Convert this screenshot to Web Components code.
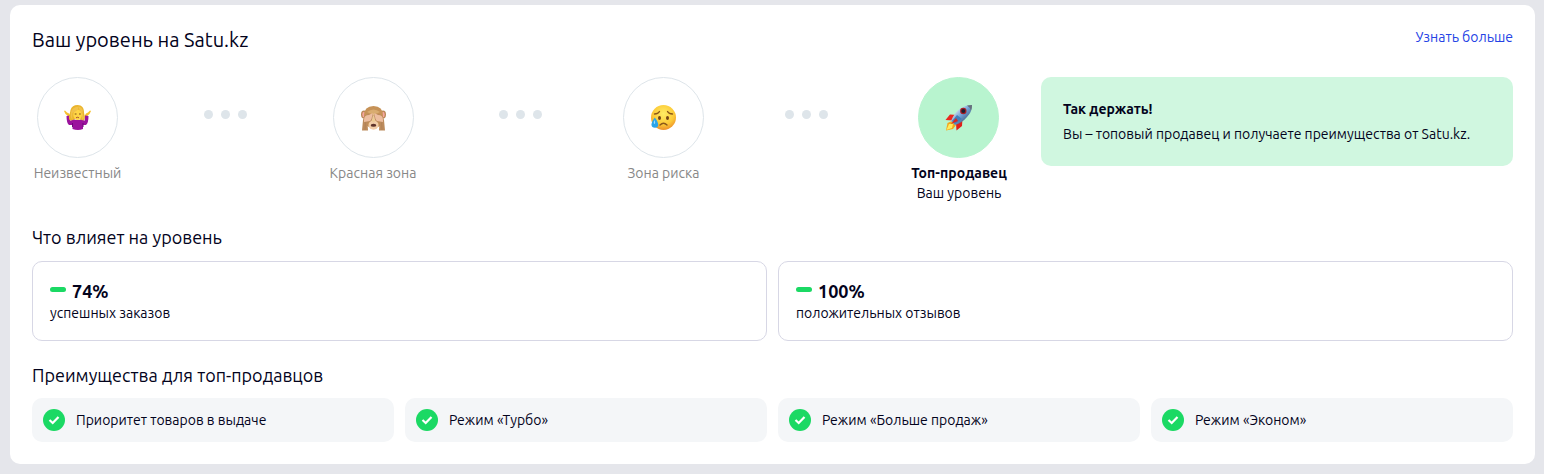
<!DOCTYPE html>
<html lang="ru">
<head>
<meta charset="utf-8">
<title>Ваш уровень на Satu.kz</title>
<style>
body{margin:0;padding:5px 9px 10px 10px;background:#e5e6eb;color:#03031c;font:14px/20px Ubuntu,"Noto Sans",sans-serif}
</style>
</head>
<body>
<seller-level></seller-level>

<template id="t-level">
<style>
:host{display:block;background:#fff;border-radius:10px;padding:22px}
header{display:flex;justify-content:space-between;align-items:flex-start}
h1,h2{margin:0;font-weight:400}
h1{font-size:20px;line-height:26px}
h2{font-size:18px;line-height:24px}
a{color:#2543e5;text-decoration:none}
.top{display:flex;gap:32px;margin:24px 0 22px}
.steps{flex:1;display:grid;grid-template-columns:91px 1fr 90px 1fr 81px 1fr 100px;justify-items:center;align-items:start}
.stats,.perks{display:grid;grid-template-columns:repeat(2,1fr);gap:11px}
.stats{margin:12px 0 22px}
.perks{grid-template-columns:repeat(4,1fr);margin-top:11px}
</style>
<header><h1>Ваш уровень на Satu.kz</h1><a href="#more">Узнать больше</a></header>
<div class="top">
<div class="steps">
<level-step>
<svg slot="icon" width="27" height="27" viewBox="0 0 27 27" aria-hidden="true">
<path d="M0 7L1 6.500L3 8.500L5 9.500L6.500 12L5 13L1.500 10Z" fill="#f7c12e"/>
<path d="M27 7L26 6.500L24 8.500L22 9.500L20.500 12L22 13L25.500 10Z" fill="#f7c12e"/>
<path d="M2.500 12L6 11.500L6.500 17L9 15Q13.500 17 18 15L20.500 17L21 11.500L24.500 12Q24.500 19 22 21L19 21V25Q14 27 8.500 25V21L5 21Q2.500 19 2.500 12Z" fill="#9b139d"/>
<path d="M8.500 19V23M19 19V23" stroke="#6c0878" stroke-width="1"/>
<path d="M5.500 16C4 13 6 10 6.500 6C7.500 2.500 10 1 13.500 1C18 1 20 4 20 8C20 11 22 13 20 16Q18 17 16 15H11Q8 17 5.500 16Z" fill="#eab42c"/>
<ellipse cx="13.600" cy="10.800" rx="4.300" ry="5.200" fill="#ffd545"/>
<path d="M15 2.500Q14 7 8.500 9Q8 12 8.500 15.500Q6 14 7 8Q8 3 15 2.500Q20 4 18.500 9L20 14L18 16Q19 9 15 5Z" fill="#f2c24a"/>
<path d="M10.700 10h1.800M15 10h1.800" stroke="#82501b" stroke-width="1.200"/>
<path d="M12 13.800q1.500-1.100 3 0" stroke="#a0442d" stroke-width=".9" fill="none"/>
</svg>Неизвестный</level-step>
<step-dots></step-dots>
<level-step>
<svg slot="icon" width="27" height="27" viewBox="0 0 27 27" aria-hidden="true">
<ellipse cx="4" cy="10.500" rx="3" ry="4" fill="#b98755"/><ellipse cx="23" cy="10.500" rx="3" ry="4" fill="#b98755"/>
<ellipse cx="4" cy="10.500" rx="1.700" ry="2.800" fill="#f7a6a0"/><ellipse cx="23" cy="10.500" rx="1.700" ry="2.800" fill="#f7a6a0"/>
<path d="M4 12Q4 2 13.500 2T23 12Q23 18 20 22L13.500 25L7 22Q4 18 4 12Z" fill="#c69257"/>
<path d="M7 8Q13.500 3 20 8Q17 10 13.500 10T7 8Z" fill="#d9ac70"/>
<ellipse cx="13.500" cy="21" rx="5" ry="4.700" fill="#f1cda8"/>
<ellipse cx="13.500" cy="21.200" rx="2.800" ry="1.500" fill="#5d332a"/>
<path d="M2 26.500L3 16Q4 11 8 10L12.500 10Q13 14 11 17L7.500 19L8 26.500Z" fill="#bc8b5c"/>
<path d="M25 26.500L24 16Q23 11 19 10L14.500 10Q14 14 16 17L19.500 19L19 26.500Z" fill="#bc8b5c"/>
<path d="M4 16Q4 11 9 11L12.500 9L13 14L10 17L4 18Z" fill="#edbea0"/>
<path d="M23 16Q23 11 18 11L14.500 9L14 14L17 17L23 18Z" fill="#edbea0"/>
<path d="M13.500 9L11.500 17Q13.500 19 15.500 17Z" fill="#edcb95"/>
<path d="M13 11L11.200 16.500M14 11L15.800 16.500M5.500 18.500L5 26M21.500 18.500L22 26" stroke="#a87b52" stroke-width=".5"/>
</svg>Красная зона</level-step>
<step-dots></step-dots>
<level-step>
<svg slot="icon" width="27" height="27" viewBox="0 0 27 27" aria-hidden="true">
<defs><radialGradient id="face" cy=".35" r=".65"><stop offset="0" stop-color="#ffed65"/><stop offset=".65" stop-color="#fcca38"/><stop offset="1" stop-color="#ed912b"/></radialGradient></defs>
<circle cx="13.500" cy="13.500" r="12.500" fill="url(#face)"/>
<ellipse cx="9.500" cy="14" rx="1.500" ry="1.900" fill="#744515"/><ellipse cx="17.500" cy="14" rx="1.500" ry="1.900" fill="#744515"/>
<path d="M4.500 10Q8 10 9.500 7.500M17.500 7.500Q19 10 22.500 10M10 21Q13.500 17.500 17 21" fill="none" stroke="#8a571a" stroke-width="1.400" stroke-linecap="round"/>
<path d="M4.800 13.500Q8.200 18 8.200 20.500Q8.200 23.800 5 23.800Q1.500 23.800 1.500 20.500Q1.500 18 4.800 13.500Z" fill="#2ba4e9"/>
<path d="M4.600 16Q3 18.500 4 20Q6 20 4.600 16Z" fill="#96dfff"/>
</svg>Зона риска</level-step>
<step-dots></step-dots>
<level-step active>
<svg slot="icon" width="27" height="27" viewBox="0 0 27 27" aria-hidden="true">
<defs><linearGradient id="hull" x1="0" y1="0" x2="1" y2="1"><stop offset=".2" stop-color="#e4eaf2"/><stop offset=".5" stop-color="#6da0d4"/><stop offset=".8" stop-color="#415b7c"/></linearGradient></defs>
<path d="M1 26.500L2.500 19L7 17L11 21L8 25Z" fill="#f5a51c"/>
<path d="M1.500 26L4 20L8 20L7 24Z" fill="#ffed5e"/>
<path d="M.5 16L5 10.500L12 11L8 16.500Z" fill="#e92820"/>
<path d="M11.500 26.500L17 22L17.500 14L11 19Z" fill="#df2019"/>
<path d="M6 17Q9 9 16 4Q21 1 27 1Q27 8 22 13Q17 19 10 21Z" fill="url(#hull)"/>
<path d="M22 1.500Q24 1 27 1Q27 4 26 7Q25 3 22 1.500Z" fill="#686f79"/>
<path d="M12 11L17 15L10 20L7 17Z" fill="#437fba"/>
<path d="M11 14L6 20L13 17Z" fill="#dc261e"/>
<circle cx="18.300" cy="7" r="3.200" fill="#a91e24"/><circle cx="18.300" cy="7" r="2" fill="#192131"/>
</svg>Топ-продавец<span slot="note">Ваш уровень</span></level-step>
</div>
<level-banner><span slot="title">Так держать!</span>Вы – топовый продавец и получаете преимущества от Satu.kz.</level-banner>
</div>
<h2>Что влияет на уровень</h2>
<div class="stats">
<stat-card><span slot="value">74%</span>успешных заказов</stat-card>
<stat-card><span slot="value">100%</span>положительных отзывов</stat-card>
</div>
<h2>Преимущества для топ-продавцов</h2>
<div class="perks">
<perk-item>Приоритет товаров в выдаче</perk-item>
<perk-item>Режим «Турбо»</perk-item>
<perk-item>Режим «Больше продаж»</perk-item>
<perk-item>Режим «Эконом»</perk-item>
</div>
</template>

<template id="t-step">
<style>
:host{display:flex;flex-direction:column;align-items:center;color:#888;white-space:nowrap}
.circle{box-sizing:border-box;width:81px;height:81px;border:1px solid #dee5ea;border-radius:50%;display:flex;align-items:center;justify-content:center;margin-bottom:5px}
:host([active]){color:#03031c}
:host([active]) .circle{background:#b8f4cf;border-color:#b8f4cf}
:host([active]) .label{font-weight:700}
</style>
<div class="circle"><slot name="icon"></slot></div>
<div class="label"><slot></slot></div>
<slot name="note"></slot>
</template>

<template id="t-dots">
<style>
:host{display:flex;gap:8px;margin-top:33px}
i{width:9px;height:9px;border-radius:50%;background:#dee5ea}
</style><i></i><i></i><i></i>
</template>

<template id="t-banner">
<style>
:host{display:block;box-sizing:border-box;width:472px;align-self:flex-start;background:#d0f7e0;border-radius:10px;padding:22px;white-space:nowrap}
strong{display:block;margin-bottom:5px}
</style><strong><slot name="title"></slot></strong><slot></slot>
</template>

<template id="t-stat">
<style>
:host{display:block;border:1px solid #d7d7e5;border-radius:10px;padding:17px}
.value{display:flex;align-items:center;gap:6px;font-size:18px;line-height:24px;font-weight:700}
i{width:16px;height:5px;margin-bottom:4px;border-radius:3px;background:#1bd964}
</style><div class="value"><i></i><slot name="value"></slot></div><slot></slot>
</template>

<template id="t-perk">
<style>
:host{display:flex;align-items:center;gap:11px;background:#f4f6f8;border-radius:10px;padding:11px}
svg{flex:none}
</style>
<svg width="22" height="22" viewBox="0 0 22 22" aria-hidden="true"><circle cx="11" cy="11" r="11" fill="#1bd964"/><path d="M6.500 11L9.700 14L15.500 8" fill="none" stroke="#fff" stroke-width="2.200"/></svg>
<span><slot></slot></span>
</template>

<script>
const define = (name, id) => customElements.define(name, class extends HTMLElement {
  constructor() {
    super();
    this.attachShadow({mode: "open"}).append(document.getElementById(id).content.cloneNode(true));
  }
});
define("level-step", "t-step");
define("step-dots", "t-dots");
define("level-banner", "t-banner");
define("stat-card", "t-stat");
define("perk-item", "t-perk");
define("seller-level", "t-level");
</script>
</body>
</html>
